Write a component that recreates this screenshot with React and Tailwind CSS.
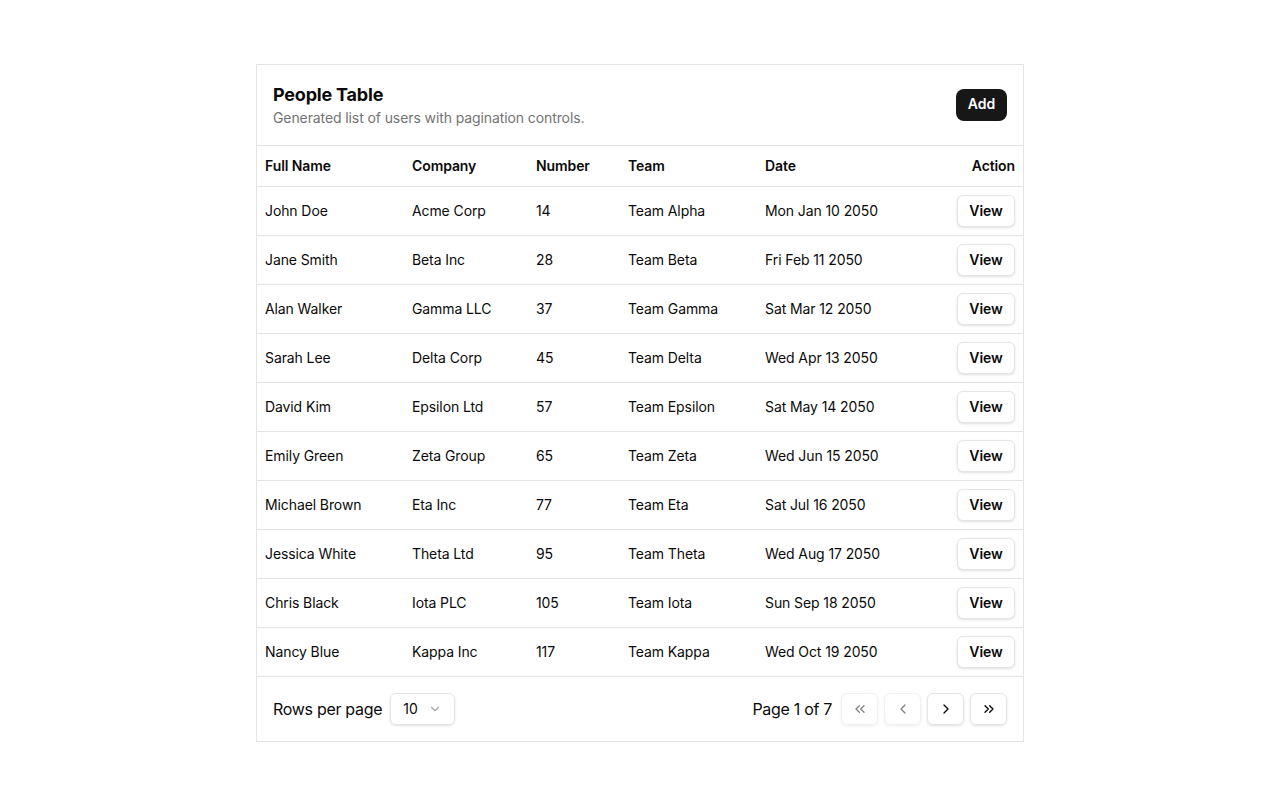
import React from "react";

const rows = [
  ["John Doe", "Acme Corp", "14", "Team Alpha", "Mon Jan 10 2050"],
  ["Jane Smith", "Beta Inc", "28", "Team Beta", "Fri Feb 11 2050"],
  ["Alan Walker", "Gamma LLC", "37", "Team Gamma", "Sat Mar 12 2050"],
  ["Sarah Lee", "Delta Corp", "45", "Team Delta", "Wed Apr 13 2050"],
  ["David Kim", "Epsilon Ltd", "57", "Team Epsilon", "Sat May 14 2050"],
  ["Emily Green", "Zeta Group", "65", "Team Zeta", "Wed Jun 15 2050"],
  ["Michael Brown", "Eta Inc", "77", "Team Eta", "Sat Jul 16 2050"],
  ["Jessica White", "Theta Ltd", "95", "Team Theta", "Wed Aug 17 2050"],
  ["Chris Black", "Iota PLC", "105", "Team Iota", "Sun Sep 18 2050"],
  ["Nancy Blue", "Kappa Inc", "117", "Team Kappa", "Wed Oct 19 2050"],
];

const Chev = ({ d, className }) => (
  <svg width="16" height="16" viewBox="0 0 24 24" fill="none" stroke="currentColor" strokeWidth="2" strokeLinecap="round" strokeLinejoin="round" className={className}>
    <path d={d} />
  </svg>
);

export default function App() {
  return (
    <div className="min-h-[806px] bg-white flex justify-center pt-[64px]" style={{ fontFamily: "Inter, 'Noto Sans', sans-serif" }}>
      <div className="w-[768px] h-[678px] border border-[#e5e5e5] flex flex-col text-[#0a0a0a]">
        <div className="flex items-center justify-between px-4 h-[81px] border-b border-[#e5e5e5]">
          <div className="flex flex-col">
            <div className="text-[18px] font-bold leading-[24px] tracking-[-0.2px]">People Table</div>
            <div className="text-[14px] text-[#737373] leading-[20px] mt-[1px] tracking-[-0.1px]">Generated list of users with pagination controls.</div>
          </div>
          <button className="h-[32px] w-[51px] rounded-lg bg-[#171717] text-white text-[14px] font-semibold leading-[20px] pb-[2px]">Add</button>
        </div>
        <table className="w-full border-collapse text-[14px] table-fixed tracking-[-0.1px]">
          <colgroup>
            <col className="w-[147px]" />
            <col className="w-[124px]" />
            <col className="w-[92px]" />
            <col className="w-[137px]" />
            <col className="w-[140px]" />
            <col />
          </colgroup>
          <thead>
            <tr className="h-[40px] border-b border-[#e5e5e5]">
              <th className="text-left font-semibold px-2">Full Name</th>
              <th className="text-left font-semibold px-2">Company</th>
              <th className="text-left font-semibold px-2">Number</th>
              <th className="text-left font-semibold px-2">Team</th>
              <th className="text-left font-semibold px-2">Date</th>
              <th className="text-right font-semibold px-2">Action</th>
            </tr>
          </thead>
          <tbody>
            {rows.map((r, i) => (
              <tr key={i} className="h-[49px] border-b border-[#e5e5e5]">
                {r.map((c, j) => (
                  <td key={j} className="px-2 whitespace-nowrap">{c}</td>
                ))}
                <td className="px-2 text-right">
                  <button className="h-[32px] w-[58px] rounded-md border border-[#e5e5e5] shadow-sm bg-white font-semibold text-[14px]">View</button>
                </td>
              </tr>
            ))}
          </tbody>
        </table>
        <div className="flex-1 flex items-center justify-between px-4">
          <div className="flex items-center gap-2">
            <span className="text-[16px] tracking-[-0.3px]">Rows per page</span>
            <div className="h-[32px] w-[65px] rounded-md border border-[#e5e5e5] shadow-sm flex items-center justify-between pl-3 pr-3">
              <span className="text-[14px]">10</span>
              <Chev d="m6 9 6 6 6-6" className="text-[#a3a3a3] w-[14px] h-[14px]" />
            </div>
          </div>
          <div className="flex items-center gap-[6px]">
            <span className="text-[16px] mr-[3px] tracking-[-0.3px]">Page 1 of 7</span>
            <button className="h-[32px] w-[37px] rounded-md border border-[#e5e5e5] shadow-sm flex items-center justify-center opacity-50">
              <Chev d="m11 17-5-5 5-5M18 17l-5-5 5-5" />
            </button>
            <button className="h-[32px] w-[37px] rounded-md border border-[#e5e5e5] shadow-sm flex items-center justify-center opacity-50">
              <Chev d="m15 18-6-6 6-6" />
            </button>
            <button className="h-[32px] w-[37px] rounded-md border border-[#e5e5e5] shadow-sm flex items-center justify-center">
              <Chev d="m9 18 6-6-6-6" />
            </button>
            <button className="h-[32px] w-[37px] rounded-md border border-[#e5e5e5] shadow-sm flex items-center justify-center">
              <Chev d="m6 17 5-5-5-5M13 17l5-5-5-5" />
            </button>
          </div>
        </div>
      </div>
    </div>
  );
}
